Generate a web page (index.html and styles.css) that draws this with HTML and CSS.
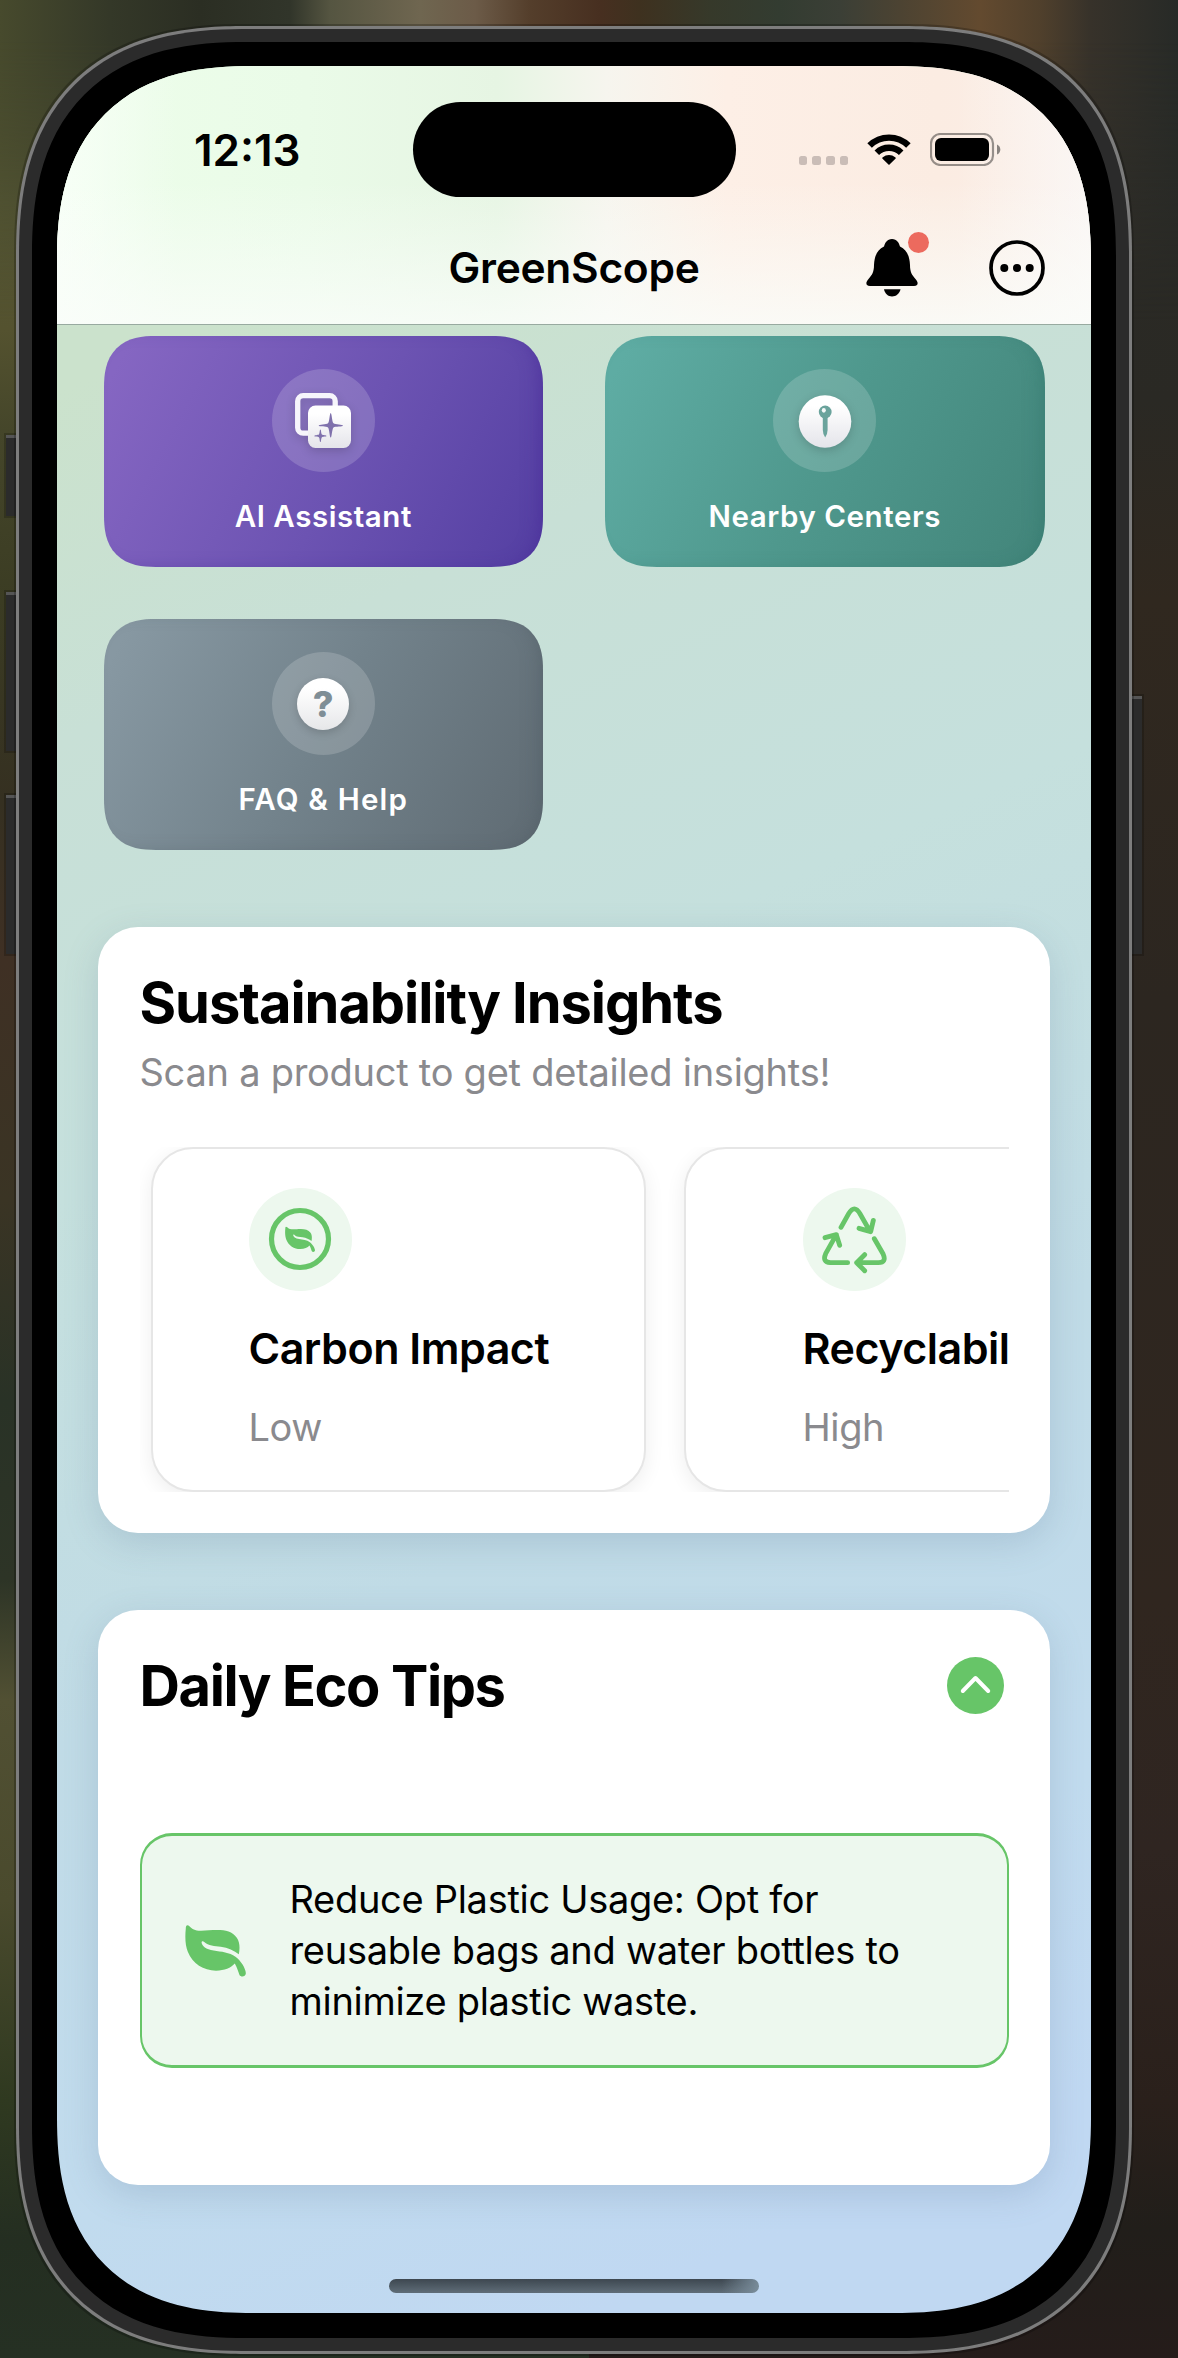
FILE: index.html
```html
<!DOCTYPE html>
<html lang="en">
<head>
<meta charset="utf-8">
<title>GreenScope</title>
<link rel="stylesheet" href="styles.css">
</head>
<body>
<svg class="defs" width="0" height="0" aria-hidden="true">
  <defs>
    <linearGradient id="glyph-fill" x1="0" y1="0" x2="0" y2="1">
      <stop offset="0.2" stop-color="#ffffff"/>
      <stop offset="1" stop-color="#e4e4ea"/>
    </linearGradient>
    <symbol id="leaf" viewBox="0 0 181 155">
      <path d="M7 1C3 1 2 5 2 10C-1 40 1 62 8 80C22 116 55 136 92 136C118 136 136 128 148 115C155 126 158 140 162 149C166 156 180 155 181 144C180 128 165 106 150 95C132 81 108 80 85 76C62 73 50 62 49 52C49 47 54 47 57 51C69 63 88 63 106 65C128 68 146 77 160 87C163 72 164 52 154 38C142 20 120 15 96 15C75 15 58 18 40 17C25 16 18 9 12 3Q10 1 7 1Z"/>
    </symbol>
  </defs>
</svg>

<div class="device">
  <span class="side-button action"></span>
  <span class="side-button volume-up"></span>
  <span class="side-button volume-down"></span>
  <span class="side-button power"></span>
  <div class="frame">
    <div class="bezel">
      <main class="screen">
        <header class="header">
          <div class="status-bar">
            <span class="time">12:13</span>
            <span class="island"></span>
            <div class="status-icons">
              <span class="signal"><i></i><i></i><i></i><i></i></span>
              <svg class="wifi" viewBox="0 0 44 31">
                <path d="M2.6 11.6A27.5 27.5 0 0 1 41.4 11.6M9.8 18.8A17.3 17.3 0 0 1 34.2 18.8" fill="none" stroke="#000" stroke-width="6.4"/>
                <path d="M22 31L15.3 24.5Q15 23.7 15.8 23.2A9.8 9.8 0 0 1 28.2 23.2Q29 23.7 28.7 24.5Z"/>
              </svg>
              <svg class="battery" viewBox="0 0 71 33">
                <rect x="1" y="1" width="62" height="31" rx="9.5" fill="none" stroke="#000" stroke-opacity=".4" stroke-width="2.2"/>
                <rect x="5" y="5" width="54" height="23" rx="6"/>
                <path d="M67 11.5Q70.3 13 70.3 16.5T67 21.5Z" fill-opacity=".45"/>
              </svg>
            </div>
          </div>
          <nav class="nav-bar">
            <h1 class="nav-title">GreenScope</h1>
            <div class="nav-actions">
              <span class="bell">
                <svg viewBox="0 0 52 58">
                  <path d="M26 0C31 0 33 4 34 7.500C41 11 43.500 17 44 26C44 33 46 36 49.500 40C52 43 52 44.500 51 46Q50 47 48 47H4Q2 47 1 46C0 44.500 0 43 2.500 40C6 36 8 33 8 26C8.500 17 11 11 18 7.500C19 4 21 0 26 0Z"/>
                  <path d="M18 50.300H34.500C33.500 55 30 57.500 26 57.500S19 55 18 50.300Z"/>
                </svg>
                <span class="badge"></span>
              </span>
              <svg class="more" viewBox="0 0 56 56">
                <circle cx="28" cy="28" r="26" fill="none" stroke="#000" stroke-width="3.700"/>
                <circle cx="15.300" cy="28" r="4"/><circle cx="28" cy="28" r="4"/><circle cx="40.700" cy="28" r="4"/>
              </svg>
            </div>
          </nav>
        </header>

        <section class="tiles">
          <a class="tile purple">
            <span class="tile-icon">
              <svg width="56" height="56" viewBox="0 0 56 56">
                <rect x="2.700" y="2.700" width="37.500" height="37.500" rx="5.500" fill="none" stroke="#f6f5fb" stroke-width="5.300"/>
                <rect x="13" y="12.500" width="43" height="42.500" rx="7.500" fill="url(#glyph-fill)"/>
                <path class="cutout" d="M35.700 20C36.800 20 37 29 38.500 30.300C40 31.500 48 31.500 48 32.700S40 33 38.500 34.500C37 36 36.800 44.500 35.700 44.500S34.400 36 33 34.500C31.500 33 23.700 33.800 23.700 32.700S31.500 31.500 33 30.300S34.600 20 35.700 20Z"/>
                <path class="cutout" d="M25.400 36.500C26.200 36.500 26 40.600 26.900 41.500S31.500 42 31.500 43S27.800 43.200 26.900 44.200S26.200 49 25.400 49S24.800 45 23.900 44.200S19.300 44 19.300 43S23 42.400 23.900 41.500S24.600 36.500 25.400 36.500Z"/>
              </svg>
            </span>
            <span class="tile-label">AI Assistant</span>
          </a>
          <a class="tile teal">
            <span class="tile-icon">
              <svg width="54" height="54" viewBox="0 0 54 54">
                <circle cx="27" cy="27.500" r="26.300" fill="url(#glyph-fill)"/>
                <path class="cutout" d="M24.800 22H29.600V36Q29.400 41 27.200 43.500Q25 41 24.800 36Z"/>
                <circle class="cutout" cx="27.200" cy="18" r="6.400"/>
                <ellipse cx="25.800" cy="16.300" rx="2" ry="2.400" fill="#f4f8f8"/>
              </svg>
            </span>
            <span class="tile-label">Nearby Centers</span>
          </a>
          <a class="tile slate">
            <span class="tile-icon"><span class="question">?</span></span>
            <span class="tile-label">FAQ &amp; Help</span>
          </a>
        </section>

        <section class="panel insights">
          <h2 class="panel-title">Sustainability Insights</h2>
          <p class="panel-subtitle">Scan a product to get detailed insights!</p>
          <div class="insight-scroller">
            <article class="insight carbon">
              <span class="insight-icon">
                <svg width="64" height="64" viewBox="0 0 64 64">
                  <circle cx="32" cy="32" r="28.500" fill="none" stroke="#67c568" stroke-width="5.200"/>
                  <use href="#leaf" x="17" y="19.500" width="30" height="25.700"/>
                </svg>
              </span>
              <h3 class="insight-title">Carbon Impact</h3>
              <p class="insight-value">Low</p>
            </article>
            <article class="insight recycling">
              <span class="insight-icon">
                <svg width="103" height="103" viewBox="0 0 309 309">
                  <path class="line" d="M114 118L137 77Q154 48 171 77L201 130M168 121L203 131L211 97M214 152L240 197Q252 224 226 224H161M185 200L161 224L185 248M134 224H82Q57 222 68 197L100 140M66 149L100 140L110 172"/>
                </svg>
              </span>
              <h3 class="insight-title">Recyclability</h3>
              <p class="insight-value">High</p>
            </article>
          </div>
        </section>

        <section class="panel tips">
          <div class="tips-head">
            <h2 class="panel-title">Daily Eco Tips</h2>
            <svg class="collapse" viewBox="0 0 57 57">
              <circle cx="28.500" cy="28.500" r="28.500" fill="#67c568"/>
              <path d="M15.800 34L28.500 21L41.200 34" fill="none" stroke="#fff" stroke-width="4" stroke-linecap="round" stroke-linejoin="round"/>
            </svg>
          </div>
          <div class="tip">
            <svg class="tip-leaf"><use href="#leaf"/></svg>
            <p class="tip-text">Reduce Plastic Usage: Opt for<br>reusable bags and water bottles to<br>minimize plastic waste.</p>
          </div>
        </section>
        <span class="home-indicator"></span>
      </main>
    </div>
  </div>
</div>
</body>
</html>
```
FILE: styles.css
```css
* { box-sizing: border-box; margin: 0; padding: 0; }

body {
  width: 1178px;
  height: 2358px;
  overflow: hidden;
  font-family: Inter, "Liberation Sans", sans-serif;
  color: #000;
  background:
    linear-gradient(180deg, #4a4c2e 60px, #555634 200px, #54522f 330px, #45462a 430px, #3b3c23 600px, #353021 800px, #3f3024 960px, #3a3424 1200px, #293226 1400px, #2d3426 1580px, #515033 1700px, #4a4a2d 1900px, #2f3920 2100px, #242e21 2240px, #253023 2358px) 0 0 / 589px 100% no-repeat,
    linear-gradient(180deg, #2b2b27 60px, #2a2924 400px, #30281f 600px, #2c2620 1000px, #30261f 1600px, #2f2521 1850px, #2a201b 2100px, #211e1a 2230px, #251c1a 2358px);
}

/* Wallpaper glow along the top edge, fading into the side tones */
body::before {
  content: "";
  position: absolute;
  inset: 0 0 auto;
  height: 320px;
  background: linear-gradient(90deg, #474a2d 0, #343828 110px, #2b2e23 200px, #31352a 290px, #555541 330px, #6f6650 420px, #6c5b48 475px, #543e2b 530px, #472f20 600px, #3e311f 640px, #36392a 710px, #333c31 780px, #3b3f36 840px, #4c4332 900px, #634a2f 980px, #50402c 1040px, #37322a 1090px, #272a27 1178px);
  -webkit-mask-image: linear-gradient(#000 40px, transparent);
  mask-image: linear-gradient(#000 40px, transparent);
}

.defs { display: block; position: absolute; }

/* Phone hardware */
.device { position: relative; width: 1116px; height: 2328px; margin: 26px 0 0 16px; }

.frame {
  position: relative;
  height: 100%;
  padding: 13px;
  border: 3px solid #7d7d7d;
  border-radius: 190px;
  background: #2b2b2b;
  box-shadow: 0 0 0 2px rgba(0, 0, 0, .22);
}

.bezel { height: 100%; padding: 24px 25px 25px; border-radius: 174px; background: #000; }

.side-button {
  position: absolute;
  left: -10px;
  width: 20px;
  background: #2b2b2b;
  border-top: 3px solid #555;
  box-shadow: 0 0 0 2px rgba(0, 0, 0, .2);
}
.action { top: 409px; height: 81px; }
.volume-up { top: 566px; height: 159px; }
.volume-down { top: 769px; height: 159px; }
.power { left: auto; right: -10px; top: 670px; height: 258px; }

.screen {
  position: relative;
  height: 2247px;
  overflow: hidden;
  border-radius: 158px;
  background: linear-gradient(156deg, #cbe2cc 12%, #c8e0d6 25%, #c5e0dd 42%, #c0dbe6 62%, #c1dbee 80%, #c0d8f2 92%);
}

@supports (corner-shape: squircle) {
  .frame { border-radius: 230px; corner-shape: superellipse(1.3); }
  .bezel { border-radius: 214px; corner-shape: superellipse(1.3); }
  .screen { border-radius: 196px; corner-shape: superellipse(1.3); }
}

/* Header */
.header {
  height: 259px;
  border-bottom: 1px solid #98aaa0;
  background:
    linear-gradient(180deg, rgba(250, 253, 250, 0) 45%, rgba(250, 253, 250, .8) 100%),
    linear-gradient(90deg, rgba(250, 255, 250, .8) 0, rgba(250, 255, 250, 0) 120px, rgba(250, 255, 250, 0) 900px, rgba(250, 250, 250, .7) 100%),
    linear-gradient(90deg, #edfeea 0, #eafbe8 250px, #e6f5e3 440px, #f6f5ee 550px, #fdefe6 670px, #fbece2 880px, #fbeee7 100%);
}

.status-bar { display: grid; grid-template-columns: 1fr 323px 1fr; align-items: center; height: 131px; padding-top: 36px; }
.time { padding-left: 25px; text-align: center; font-size: 44px; font-weight: 600; letter-spacing: 0; line-height: 52px; }
.island { height: 95px; border-radius: 48px; background: #000; }
.status-icons { display: flex; align-items: center; padding-left: 63px; }
.signal { display: flex; gap: 5.3px; margin: 22px 19px 0 0; }
.signal i { width: 8.5px; height: 8.5px; border-radius: 2.5px; background: #cabdb7; }
.wifi { width: 44px; height: 31px; margin: -1px 19px 0 0; }
.battery { width: 71px; height: 33px; }

.nav-bar { display: grid; grid-template-columns: 1fr auto 1fr; align-items: center; height: 127px; padding: 15px 46px 0; }
.nav-title { grid-column: 2; font-size: 42.5px; font-weight: 600; letter-spacing: -.3px; line-height: 52px; }
.nav-actions { display: flex; justify-content: flex-end; align-items: center; gap: 71.500px; }
.bell { position: relative; width: 52px; height: 58px; }
.bell svg { display: block; }
.badge { position: absolute; left: 42px; top: -7px; width: 21px; height: 21px; border-radius: 50%; background: #ec6a5e; }
.more { width: 56px; height: 56px; }

/* Shortcut tiles */
.tiles { display: grid; grid-template-columns: 439.500px 439.500px; gap: 51.500px 62px; padding: 10.700px 46.500px 0; }

.tile {
  display: flex;
  flex-direction: column;
  align-items: center;
  height: 231.500px;
  padding-top: 33.500px;
  border-radius: 38px;
  color: #fff;
}
.purple { background: linear-gradient(118deg, #8566c2 5%, #6c53b2 55%, #5540a3 97%); box-shadow: inset -10px -2px 18px -8px rgba(70, 40, 150, .6); }
.teal { background: linear-gradient(118deg, #5eaca3 5%, #4f988d 50%, #43867b 97%); box-shadow: inset -10px -2px 18px -8px rgba(45, 115, 105, .5); }
.slate { background: linear-gradient(118deg, #8798a2 5%, #72828b 50%, #606c74 97%); box-shadow: inset -10px -2px 18px -8px rgba(75, 90, 98, .5); }

.tile-icon { display: grid; place-items: center; width: 103px; height: 103px; border-radius: 50%; background: rgba(255, 255, 255, .17); }
.tile-icon svg { display: block; filter: drop-shadow(0 3px 5px rgba(0, 0, 0, .16)); }
.purple .cutout { fill: #7f71ac; }
.teal .cutout { fill: #6aa39c; }
.question {
  width: 52px;
  height: 52px;
  border-radius: 50%;
  background: linear-gradient(#fff 20%, #e6e7e9);
  box-shadow: 0 3px 8px rgba(0, 0, 0, .16);
  color: #7f8e96;
  font-size: 36px;
  font-weight: 800;
  line-height: 52px;
  text-align: center;
}
.tile-label { margin-top: 26px; font-size: 29.500px; font-weight: 600; letter-spacing: .55px; line-height: 36px; }
.slate .tile-label { letter-spacing: 1.200px; }

@supports (corner-shape: squircle) {
  .tile { border-radius: 52px; corner-shape: superellipse(1.35); }
}

/* White panels */
.panel {
  width: 952px;
  margin: 0 0 0 41px;
  border-radius: 40px;
  background: #fff;
  box-shadow: 0 10px 34px rgba(90, 120, 150, .22);
}
.panel-title { font-size: 56px; font-weight: 700; letter-spacing: -1.050px; line-height: 68px; }
.insights { height: 606px; margin-top: 76.500px; padding: 42px 41.500px 40px; }
.panel-subtitle { margin-top: 9px; font-size: 38px; line-height: 52px; letter-spacing: -.26px; color: #8a8a8e; white-space: nowrap; }

.insight-scroller { display: flex; gap: 37.500px; width: 869px; height: 345px; margin-top: 49px; padding-left: 11.500px; overflow: hidden; }
.insight {
  flex: none;
  width: 495px;
  padding-top: 39px;
  border: 2px solid #e6e6e6;
  border-radius: 42px;
  background: #fff;
  box-shadow: 0 5px 20px rgba(0, 0, 0, .07);
}
.carbon { padding-left: 95.500px; }
.recycling { padding-left: 117px; }
.insight-icon { display: grid; place-items: center; width: 103px; height: 103px; border-radius: 50%; background: #edf8ee; fill: #67c568; }
.line { fill: none; stroke: #67c568; stroke-width: 14.500; stroke-linecap: round; stroke-linejoin: round; }
.insight-title { margin-top: 31px; font-size: 43px; font-weight: 600; letter-spacing: -.5px; line-height: 52px; white-space: nowrap; }
.insight-value { margin-top: 30.500px; font-size: 38px; line-height: 46px; letter-spacing: -.4px; color: #8a8a8e; }

.tips { height: 575px; margin-top: 77px; padding: 42px 41.500px 0; }
.tips .panel-title { letter-spacing: -1.400px; }
.tips-head { display: flex; justify-content: space-between; align-items: center; height: 68px; padding-right: 5px; }
.collapse { width: 57px; height: 57px; }
.tip {
  display: flex;
  align-items: center;
  gap: 43.500px;
  height: 235px;
  margin-top: 113.500px;
  padding-left: 43.500px;
  border: solid #67c568;
  border-width: 3px 2px;
  border-radius: 32px;
  background: #edf8ee;
}
.tip-leaf { width: 61px; height: 52px; fill: #67c568; }
.tip-text { font-size: 38px; line-height: 51.400px; letter-spacing: -.3px; white-space: nowrap; }

.home-indicator {
  position: absolute;
  left: 332px;
  bottom: 20.500px;
  width: 370px;
  height: 14px;
  border-radius: 7px;
  background: linear-gradient(90deg, rgba(125, 145, 160, 0) 90%, rgba(125, 145, 160, .9) 100%), linear-gradient(#3d4750, #5f6d78);
}
```
